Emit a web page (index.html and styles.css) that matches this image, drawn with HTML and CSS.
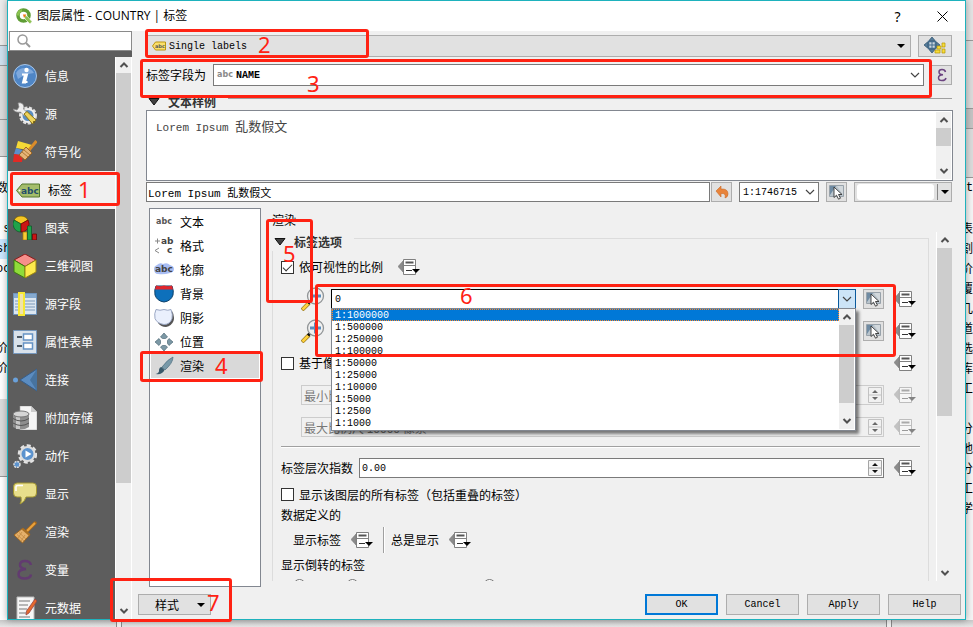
FILE: index.html
```html
<!DOCTYPE html>
<html lang="zh-CN">
<head>
    <meta charset="UTF-8">
    <title>图层属性 - COUNTRY | 标签</title>
    <link rel="stylesheet" href="styles.css">
</head>
<body>

<!-- shared icons -->
<svg class="sprite" aria-hidden="true">
    <symbol id="i-up" viewBox="0 0 16 16"><path d="M4.5 10 8 6.5l3.500 3.500" fill="none" stroke="#505050" stroke-width="2"/></symbol>
    <symbol id="i-down" viewBox="0 0 16 16"><path d="M4.500 6 8 9.500 11.500 6" fill="none" stroke="#505050" stroke-width="2"/></symbol>
    <symbol id="i-chevron" viewBox="0 0 16 16"><path d="M4 6l4 4 4-4" fill="none" stroke="#444" stroke-width="1.200"/></symbol>
    <symbol id="i-caret" viewBox="0 0 8 8"><path d="M0 2h8L4 6z" fill="#000"/></symbol>
    <symbol id="i-fold" viewBox="0 0 12 8"><path d="M1 .500h10L6 7z" fill="#404040" stroke="#111"/></symbol>
    <symbol id="i-defined" viewBox="0 0 22 16">
        <path d="M5 2v11L0 7.500z" fill="#8c8c8c" stroke="#777" stroke-width=".5"/>
        <path d="M5.500.500h12v15h-12zM5.500 6.500h12" fill="#fff" stroke="#808080"/>
        <path d="M7.500 3.500h8" stroke="#555" stroke-width="2"/>
        <path d="M8 11.500h6" stroke="#333"/>
        <path d="M14 10h8l-4 4z" fill="#000"/>
    </symbol>
    <symbol id="i-pick" viewBox="0 0 16 16">
        <path d="M.500 1.500h14v11h-14z" fill="#b9c4cc" stroke="#98a2aa"/>
        <path d="M1 2h6L1 11z" fill="#6f8ba3"/><path d="M8 2h6v9z" fill="#d2d8dc"/>
        <path d="M5 3v10.500l2.500-2.300 2 4 2-1-2-3.700H13z" fill="#fff" stroke="#333" stroke-width=".9"/>
    </symbol>
    <symbol id="i-zoom" viewBox="0 0 24 24">
        <path d="M1 23l7-7" stroke="#9a7a20" stroke-width="4"/><path d="M1.500 22.500l6-6" stroke="#ffd23c" stroke-width="2.500"/>
        <path d="M7 16.500L9.500 14" stroke="#111" stroke-width="3"/>
        <circle cx="14.500" cy="9" r="8" fill="#f0f0f0" stroke="#909496" stroke-width="1.300"/>
        <path d="M9 9h11" stroke="#5b8dbb" stroke-width="3"/>
    </symbol>
    <symbol id="i-spin" viewBox="0 0 14 16">
        <path d="M.500.500h13v15H.500zM.500 8h13" fill="#f3f3f3" stroke="#a5a5a5"/>
        <path d="M4 6h6L7 3zM4 10h6l-3 3z" fill="#111"/>
    </symbol>
    <symbol id="i-broom" viewBox="0 0 24 24">
        <path d="M22 3l-8 8" stroke="#a9691b" stroke-width="3.500" stroke-linecap="round"/><path d="M22 3l-8 8" stroke="#e9a33e" stroke-width="2"/>
        <path d="M10 8l7 6.500L9.500 23 1 15z" fill="#e5b06b" stroke="#9a6420"/>
        <path d="M9.500 9l7 6" stroke="#a86f24" stroke-width="2"/>
        <path d="M4 14.500l7 6.500M6 12.500l7 6.500M8 21l4-6M5 18l4-6" stroke="#c38a43" stroke-width=".8"/>
    </symbol>
</svg>

<div class="desktop">
    <div class="strip strip-left" aria-hidden="true">
        <div class="chrome tall"></div>
        <div class="chrome tool-bar"></div>
        <div class="chrome mid"></div>
        <div class="chrome"></div>
        <p class="lone">数</p>
        <p>&nbsp;s</p>
        <p class="hit">sh</p>
        <p>oc</p>
        <p class="far">价</p>
        <p>价</p>
        <div class="chrome foot"></div>
    </div>

    <div class="dialog">
        <header class="titlebar">
            <svg class="logo" viewBox="0 0 16 16">
                <circle cx="7.500" cy="7.500" r="5.500" fill="none" stroke="#5f9d35" stroke-width="3.500"/>
                <path d="M2 7.500a5.500 5.500 0 0 1 4-5.300" fill="none" stroke="#8bc34f" stroke-width="2.500"/>
                <path d="M8 7.500l3 .5 5 5.500L14 16l-5-5z" fill="#8cc152" stroke="#fff" stroke-width=".6"/>
                <path d="M7 6.500h3.500L8 10z" fill="#ee7913"/>
            </svg>
            <h1>图层属性 - COUNTRY | 标签</h1>
            <button class="title-btn" aria-label="帮助">?</button>
            <button class="title-btn" aria-label="关闭"><svg width="11" height="11" viewBox="0 0 11 11"><path d="M.500.500l10 10M10.500.500l-10 10" stroke="#000"/></svg></button>
        </header>

        <div class="body">
            <nav class="side">
                <div class="search">
                    <svg width="14" height="14" viewBox="0 0 14 14"><circle cx="5.500" cy="5.500" r="4.500" fill="none" stroke="#999" stroke-width="1.500"/><path d="M9 9l4 4" stroke="#999" stroke-width="2"/></svg>
                    <input type="text" aria-label="搜索">
                </div>
                <div class="side-main">
                    <ul class="pages">
                        <li><svg viewBox="0 0 24 24"><circle cx="12" cy="12" r="11.500" fill="#4f86c6" stroke="#a8c5e6"/><path d="M3 9a10 9 0 0 1 18 0q-9 1-16 6z" fill="#7fa9dc"/><circle cx="13.500" cy="6" r="2.200" fill="#fff"/><path d="M9 10.500h5l-2 7.500h2.500M12 10.500l-2 8h3" fill="none" stroke="#fff" stroke-width="2"/></svg>信息</li>
                        <li><svg viewBox="0 0 24 24"><circle cx="15" cy="13.500" r="7.500" fill="none" stroke="#dedede" stroke-width="3" stroke-dasharray="3 1.500"/><circle cx="15" cy="13.500" r="6.500" fill="#5b8ec2" stroke="#eee" stroke-width="2"/><path d="M5 1q5-1 6 4l-.5 2 4 4-3 3-4-4Q2 11 0 7l4 1 2-3z" fill="#eee" stroke="#888" stroke-width=".7"/><path d="M11 12l3-2.500 9 8.500-3.500 4z" fill="#eed35c" stroke="#8b7417"/><circle cx="21" cy="20" r="1" fill="#6c5812"/></svg>源</li>
                        <li><svg viewBox="0 0 24 24"><path d="M5 1l14 4-4 5L3 8z" fill="#f5d936"/><path d="M3 8l9 3-3 5-8-2z" fill="#5c8fcb"/><path d="M1 14l9 1-1 7H0z" fill="#e12a25"/><path d="M23.500 1L16 10" stroke="#d98b2b" stroke-width="3"/><path d="M13 7l6 6-7 7-6-5z" fill="#e5b577" stroke="#9a6420"/><path d="M9 12l6 5M11 10l6 5" stroke="#b07a35"/></svg>符号化</li>
                        <li class="current"><svg viewBox="0 0 24 24"><path d="M6 6h17.500v13H6L.5 12.500z" fill="#a5bd6b" stroke="#55792c"/><circle cx="3.500" cy="12.500" r="1" fill="#fff"/><text x="5" y="16" class="tag-text">abc</text></svg>标签</li>
                        <li><svg viewBox="0 0 24 24"><path d="M8 8L1 4a8 8 0 0 1 7-4 8 8 0 0 1 7 4z" fill="#f5c625" stroke="#6b5600" stroke-width=".7"/><path d="M8 8L1 4a8 8 0 0 0 7 12z" fill="#1fa34a" stroke="#0c5525" stroke-width=".7"/><path d="M8 8l7-4a8 8 0 0 1-7 12z" fill="#cb1515" stroke="#600" stroke-width=".7"/><path d="M10 16h4v8h-4z" fill="#f6cc36" stroke="#a97a00" stroke-width=".7"/><path d="M14.500 10h4v14h-4z" fill="#1fa34a" stroke="#0c5525" stroke-width=".7"/><path d="M19.500 18h4v6h-4z" fill="#cb1515" stroke="#600" stroke-width=".7"/></svg>图表</li>
                        <li><svg viewBox="0 0 24 24"><path d="M12 0l11 6-11 6.500L1 6z" fill="#f78f8b" stroke="#8e1a1a"/><path d="M1 6l11 6.500V24L1 18z" fill="#8fdb3a" stroke="#3d7a10"/><path d="M23 6l-11 6.500V24l11-6z" fill="#fde94c" stroke="#9a8412"/></svg>三维视图</li>
                        <li><svg viewBox="0 0 24 24"><path d="M.500 1.500h23v21H.500z" fill="#dce6f0" stroke="#6e94bd"/><path d="M1 2h22v4H1z" fill="#86aad0"/><path d="M12 9h10M12 12h10M12 15h10M12 18h10M2 9h3M2 12h3M2 15h3M2 18h3" stroke="#7a99ba"/><path d="M6 1h5v22H6z" fill="#f0e3ab" stroke="#f7e833" stroke-width="2"/></svg>源字段</li>
                        <li><svg viewBox="0 0 24 24"><path d="M.500.500h23v23H.500z" fill="#d9e2eb" stroke="#7597bd"/><path d="M4 7h5M4 16h5" stroke="#4f5c68" stroke-width="2"/><path d="M10.500 4h9v6h-9zM10.500 13h9v6h-9z" fill="#fff" stroke="#6593c5" stroke-width="1.500"/></svg>属性表单</li>
                        <li><svg viewBox="0 0 24 24"><path d="M24 1v22L7 12z" fill="#5b8cc0" stroke="#365e8b"/><path d="M24 1v22l-7-11z" fill="#47739f"/><circle cx="2.500" cy="12" r="2.500" fill="#6aa1db"/></svg>连接</li>
                        <li><svg viewBox="0 0 24 24"><path d="M7 0h11l6 6v18H7z" fill="#f5f5f5" stroke="#aaa" stroke-width=".6"/><path d="M18 0v6h6" fill="#ccc"/><path d="M0 8v13q8 5 16 0V8z" fill="#8e8e8e"/><path d="M3 9v14h4V9z" fill="#c8c8c8"/><ellipse cx="8" cy="8" rx="8" ry="3" fill="#d5d5d5" stroke="#777"/><path d="M0 12.500q8 5 16 0M0 17q8 5 16 0" fill="none" stroke="#555"/></svg>附加存储</li>
                        <li><svg viewBox="0 0 24 24"><circle cx="14.500" cy="10" r="8.500" fill="none" stroke="#e4e4e4" stroke-width="2.500" stroke-dasharray="4 2.500"/><circle cx="14.500" cy="10" r="7" fill="#5c93ce" stroke="#ddd" stroke-width="2"/><path d="M12.500 6.500l6 3.500-6 3.500z" fill="#fff"/><circle cx="4" cy="20.500" r="3" fill="#5c93ce" stroke="#ddd" stroke-width="1.500" stroke-dasharray="2 .8"/></svg>动作</li>
                        <li><svg viewBox="0 0 24 24"><path d="M4 1h16q3.500 0 3.500 4v6q0 4-3.500 4h-7q-1 5-6 7 2-3 1-7H4Q.5 15 .5 11V5Q.5 1 4 1z" fill="#e8df8c" stroke="#a29632"/><path d="M3 9V5q0-1.500 2-1.500h5" fill="none" stroke="#fff" stroke-width="1.500"/></svg>显示</li>
                        <li><svg><use href="#i-broom"/></svg>渲染</li>
                        <li><svg viewBox="0 0 24 24"><path d="M18 7q-1-4-6-4-5 0-5 4 0 3.500 6 4M13 11Q5.500 11.500 5.500 16q0 4.500 6 4.500 6 0 6.500-4" fill="none" stroke="#623b70" stroke-width="2.500"/></svg>变量</li>
                        <li><svg viewBox="0 0 24 24"><path d="M4 1h17v23H4z" fill="#f6f6f6" stroke="#bbb"/><path d="M6 5h11M6 9h9M6 13h8M6 17h7M6 21h11" stroke="#777"/><path d="M22 3l2 2-8 12-3 2 .5-4z" fill="#e66a2c" stroke="#944" stroke-width=".8"/></svg>元数据</li>
                    </ul>
                    <div class="scroll side-scroll">
                        <svg><use href="#i-up"/></svg>
                        <div class="thumb"></div>
                        <svg class="end"><use href="#i-down"/></svg>
                    </div>
                </div>
            </nav>

            <main class="main">
                <div class="content">
                    <div class="row mode-row">
                        <div class="combo gray">
                            <svg class="mode-icon" viewBox="0 0 14 10"><path d="M3.500 1h10v8h-10L.5 5z" fill="#fbe06a" stroke="#bb9510"/><text x="3" y="7" class="tiny-text">abc</text></svg>
                            <select class="mode-select" aria-label="标签模式"><option>Single labels</option></select>
                            <svg class="caret"><use href="#i-caret"/></svg>
                        </div>
                        <button class="tool wide" aria-label="自动放置设置"><svg width="22" height="18" viewBox="0 0 22 18"><path d="M8 0l3 3.500H5zM8 16l3-3.500H5zM0 8l3.500-3v6zM16 8l-3.500-3v6z" fill="#557d9c" stroke="#2c4d69" stroke-width=".7"/><path d="M4.500 4.500h7v7h-7z" fill="#c9d6df" stroke="#456d8c" stroke-width="1.500"/><path d="M8 3v10M3 8h10" stroke="#456d8c"/><path d="M13 9h4v3h-4zM18 6h3v4h-3zM11 13h5v3h-5zM18 12h3v4h-3z" fill="#f7dc3b" stroke="#b59700" stroke-width=".7"/></svg></button>
                    </div>

                    <div class="row field-row">
                        <label for="field">标签字段为</label>
                        <div class="combo">
                            <span class="abc small" aria-hidden="true">abc</span>
                            <select id="field" class="field-select"><option>NAME</option></select>
                            <svg class="chev"><use href="#i-chevron"/></svg>
                        </div>
                        <button class="tool" aria-label="表达式"><svg width="12" height="14" viewBox="0 0 12 14"><path d="M9.500 4q-.5-2.500-3.500-2.500T3 4q0 2.500 4 2.700Q2.500 7 2.500 9.700 2.500 12.500 6 12.500t4-2.500" fill="none" stroke="#6b4380" stroke-width="1.500"/></svg></button>
                    </div>

                    <div class="sample-head"><svg><use href="#i-fold"/></svg><h2>文本样例</h2><i></i></div>

                    <div class="preview">
                        <p><span class="mono">Lorem Ipsum </span>乱数假文</p>
                        <div class="scroll">
                            <svg><use href="#i-up"/></svg>
                            <div class="thumb"></div>
                            <svg class="end"><use href="#i-down"/></svg>
                        </div>
                    </div>

                    <div class="row sample-row">
                        <input type="text" class="sample-text" value="Lorem Ipsum 乱数假文" aria-label="样例文本">
                        <button class="tool" aria-label="重置"><svg width="14" height="14" viewBox="0 0 14 14"><path d="M1 6l5-5v3q7-.5 7 5 0 3-3 4 1.500-5-4-4.500V12z" fill="#e8833a" stroke="#c96a25" stroke-width=".6"/></svg></button>
                        <div class="combo scale">
                            <select class="mono" aria-label="预览比例"><option>1:1746715</option></select>
                            <svg class="chev"><use href="#i-chevron"/></svg>
                        </div>
                        <button class="tool" aria-label="地图比例"><svg class="s16"><use href="#i-pick"/></svg></button>
                        <button class="color-btn" aria-label="背景颜色"><i></i><svg><use href="#i-caret"/></svg></button>
                    </div>

                    <div class="panes">
                        <ul class="sections">
                            <li><span class="abc">abc</span>文本</li>
                            <li><svg viewBox="0 0 20 20"><path d="M1 5h5M3.500 2.500v5M5 12l-4 2.500L5 17" fill="none" stroke="#888"/><text x="7" y="8" class="fmt-text">ab</text><text x="13" y="17" class="fmt-text">c</text></svg>格式</li>
                            <li><svg viewBox="0 0 20 20"><path d="M3 5q3-3 6-1 4-2 7 1 4 1 4 4t-4 4q-6 2-12 1Q0 14 0 9q0-3 3-4z" fill="#a8bdf3"/><text x="1" y="12" class="fmt-text">abc</text></svg>轮廓</li>
                            <li><svg viewBox="0 0 20 20"><path d="M2 2h16q2 5 1 9-2 6-9 7-7-1-9-7-1-5 1-9z" fill="#0d70bb" stroke="#0b4069"/><path d="M2 1.500q4 1.500 8 0 4 1.500 8 0l1 4H1z" fill="#e0262d"/></svg>背景</li>
                            <li><svg viewBox="0 0 20 20"><path d="M5 3h13q3 5 1.500 10-2 5-7.500 6-5 0-8-4z" fill="#555"/><path d="M2 1.500q4 1.500 8 0 4 1.500 7 0 2 5 1 9-2 6-8 6-7-1-9-6-1-5 1-9z" fill="#eaf0fd" stroke="#9aa7c4"/></svg>阴影</li>
                            <li><svg viewBox="0 0 20 20"><path d="M10 1l3.500 4-2 1.500h-3L6.500 5zM10 19l3.500-4-2-1.500h-3l-2 1.500zM1 10l4-3.500 1.500 2v3L5 13.500zM19 10l-4-3.500-1.500 2v3l1.500 2z" fill="#7c98a5" stroke="#506c79" stroke-width=".7"/></svg>位置</li>
                            <li class="current"><svg viewBox="0 0 20 20"><path d="M19 1q0 6-8 13l-3-3Q14 3 19 1z" fill="#7999a8" stroke="#4f6f7f" stroke-width=".7"/><path d="M7.500 11l3 3q-2 5-9 4 4-1 3.500-4 .5-3 2.500-3z" fill="#39596a"/></svg>渲染</li>
                        </ul>

                        <div class="pane">
                            <p class="pane-title">渲染</p>
                            <div class="pane-scroll">
                                <section class="group">
                                    <div class="group-head"><svg><use href="#i-fold"/></svg><h2>标签选项</h2><i></i></div>
                                    <div class="group-body">
                                        <div class="line checks">
                                            <label class="check"><input type="checkbox" checked>依可视性的比例</label>
                                            <button class="dd" aria-label="数据定义"><svg><use href="#i-defined"/></svg></button>
                                        </div>
                                        <div class="line scales">
                                            <svg class="lens"><use href="#i-zoom"/></svg>
                                            <div class="open-combo">
                                                <input type="text" class="mono" value="0" aria-label="最小比例">
                                                <button class="drop" aria-label="展开"><svg class="s16"><use href="#i-chevron"/></svg></button>
                                                <div class="popup">
                                                    <ul role="listbox" aria-label="比例">
                                                        <li role="option" aria-selected="true">1:1000000</li>
                                                        <li role="option">1:500000</li>
                                                        <li role="option">1:250000</li>
                                                        <li role="option">1:100000</li>
                                                        <li role="option">1:50000</li>
                                                        <li role="option">1:25000</li>
                                                        <li role="option">1:10000</li>
                                                        <li role="option">1:5000</li>
                                                        <li role="option">1:2500</li>
                                                        <li role="option">1:1000</li>
                                                    </ul>
                                                    <div class="scroll">
                                                        <svg><use href="#i-up"/></svg>
                                                        <div class="thumb"></div>
                                                        <svg class="end"><use href="#i-down"/></svg>
                                                    </div>
                                                </div>
                                            </div>
                                            <button class="tool" aria-label="取当前比例"><svg class="s16"><use href="#i-pick"/></svg></button>
                                            <button class="dd" aria-label="数据定义"><svg><use href="#i-defined"/></svg></button>
                                        </div>
                                        <div class="line scales">
                                            <svg class="lens" viewBox="0 0 24 24"><use href="#i-zoom"/><path d="M14.500 3.500v11" stroke="#5b8dbb" stroke-width="3"/></svg>
                                            <div class="open-combo"></div>
                                            <button class="tool" aria-label="取当前比例"><svg class="s16"><use href="#i-pick"/></svg></button>
                                            <button class="dd" aria-label="数据定义"><svg><use href="#i-defined"/></svg></button>
                                        </div>
                                        <div class="line">
                                            <label class="check grow"><input type="checkbox">基于像素大小的可视性</label>
                                            <button class="dd" aria-label="数据定义"><svg><use href="#i-defined"/></svg></button>
                                        </div>
                                        <div class="line indent">
                                            <div class="spin off"><input type="text" value="最小比例尺 3 像素" aria-label="最小尺寸" disabled><svg><use href="#i-spin"/></svg></div>
                                            <button class="dd" aria-label="数据定义" disabled><svg><use href="#i-defined"/></svg></button>
                                        </div>
                                        <div class="line indent">
                                            <div class="spin off"><input type="text" value="最大比例尺 10000 像素" aria-label="最大尺寸" disabled><svg><use href="#i-spin"/></svg></div>
                                            <button class="dd" aria-label="数据定义" disabled><svg><use href="#i-defined"/></svg></button>
                                        </div>
                                        <hr>
                                        <div class="line">
                                            <label class="z-label" for="zindex">标签层次指数</label>
                                            <div class="spin"><input id="zindex" type="text" class="mono" value="0.00"><svg><use href="#i-spin"/></svg></div>
                                            <button class="dd" aria-label="数据定义"><svg><use href="#i-defined"/></svg></button>
                                        </div>
                                        <label class="check short"><input type="checkbox">显示该图层的所有标签（包括重叠的标签）</label>
                                        <p class="text-line">数据定义的</p>
                                        <div class="line show">
                                            <span>显示标签</span>
                                            <button class="dd" aria-label="数据定义"><svg><use href="#i-defined"/></svg></button>
                                            <i class="bar"></i>
                                            <span>总是显示</span>
                                            <button class="dd" aria-label="数据定义"><svg><use href="#i-defined"/></svg></button>
                                        </div>
                                        <p class="text-line">显示倒转的标签</p>
                                        <div class="radios">
                                            <input type="radio" name="upside" aria-label="从不">
                                            <input type="radio" name="upside" aria-label="旋转时">
                                            <input type="radio" name="upside" aria-label="总是">
                                        </div>
                                    </div>
                                </section>
                                <div class="scroll">
                                    <svg><use href="#i-up"/></svg>
                                    <div class="thumb"></div>
                                    <svg class="end"><use href="#i-down"/></svg>
                                </div>
                            </div>
                        </div>
                    </div>
                </div>

                <footer class="buttons">
                    <button class="btn style-btn">样式<svg><use href="#i-caret"/></svg></button>
                    <button class="btn primary">OK</button>
                    <button class="btn">Cancel</button>
                    <button class="btn">Apply</button>
                    <button class="btn">Help</button>
                </footer>
            </main>
        </div>

        <div class="mark m1"></div><b class="num n1">1</b>
        <div class="mark m2"></div><b class="num n2">2</b>
        <div class="mark m3"></div><b class="num n3">3</b>
        <div class="mark m4"></div><b class="num n4">4</b>
        <div class="mark m5"></div><b class="num n5">5</b>
        <div class="mark m6"></div><b class="num n6">6</b>
        <div class="mark m7"></div><b class="num n7">7</b>
    </div>

    <div class="strip strip-right" aria-hidden="true">
        <div class="chrome top"></div>
        <div class="chrome bar1"></div>
        <div class="chrome bar2"></div>
        <div class="chrome bar3"></div>
        <p class="latin">te</p>
        <p class="first">表格</p>
        <p>割线</p>
        <p>价格</p>
        <p>覆盖</p>
        <p>几何</p>
        <p>道路</p>
        <p>选择</p>
        <p>库房</p>
        <p>工具</p>
        <p class="next">分析</p>
        <p>地形</p>
        <p>分析</p>
        <p>工具</p>
        <p>学习</p>
    </div>
</div>

<div class="under" aria-hidden="true"><i></i><i></i></div>

</body>
</html>
```

FILE: styles.css
```css
* {
    box-sizing: border-box;
}

body {
    margin: 0;
    height: 100vh;
    display: flex;
    flex-direction: column;
    overflow: hidden;
    background: #e4e4e4;
    font-family: "Noto Sans CJK SC", sans-serif;
    font-size: 12px;
    line-height: 16px;
    color: #000;
}

h1, h2, p, ul {
    margin: 0;
    padding: 0;
    font-size: 12px;
    list-style: none;
}

button, input, select {
    font-family: inherit;
    font-size: 12px;
    color: #000;
    margin: 0;
    padding: 0;
    border-radius: 0;
}

svg {
    display: block;
    flex: none;
}

.sprite {
    position: absolute;
    width: 0;
    height: 0;
}

.s16 {
    width: 16px;
    height: 16px;
}

.mono, .mono option {
    font-family: "Liberation Mono", monospace;
    font-size: 10px;
}

.desktop {
    flex: 1;
    min-height: 0;
    display: flex;
}

/* windows behind the dialog */
.strip {
    width: 7px;
    flex: none;
    overflow: hidden;
    background: #fff;
    line-height: 20px;
}

.strip p {
    height: 20px;
    white-space: nowrap;
    overflow: hidden;
}

.strip-left p {
    font-family: "Liberation Mono", "Noto Sans CJK SC", monospace;
    text-indent: -4px;
}

.chrome {
    height: 37px;
    background: #dcdcdc;
    border-bottom: 1px solid #999;
}

.strip-left .tall {
    height: 46px;
    background: #ececec;
}

.strip-left .tool-bar {
    height: 20px;
    background: #cfe0ee;
}

.strip-left .mid {
    height: 54px;
}

.strip-left .lone {
    margin-top: 22px;
    margin-bottom: 20px;
}

.strip-left .hit {
    background: #cce8ff;
}

.strip-left .far {
    margin-top: 60px;
}

.strip-left .foot {
    height: 78px;
    margin-top: 20px;
}

.strip-right {
    background: #f5f5f5;
}

.strip-right p {
    text-indent: -5px;
}

.strip-right .latin {
    text-indent: 0;
    font-family: "Liberation Mono", monospace;
}

.strip-right .top {
    height: 41px;
    background: #e4e4e4;
}

.strip-right .bar1 {
    height: 68px;
}

.strip-right .bar2 {
    height: 20px;
    background: #c4c4c4;
}

.strip-right .bar3 {
    height: 49px;
}

.strip-right .first {
    margin-top: 20px;
}

.strip-right .next {
    margin-top: 20px;
}

.under {
    height: 7px;
    flex: none;
    display: flex;
    justify-content: space-between;
    padding: 0 81px 0 116px;
    background: linear-gradient(#c8c8c8, #e6e6e6);
}

.under i {
    width: 6px;
    border: solid #888;
    border-width: 0 1px;
    background: #f0f0f0;
}

/* dialog */
.dialog {
    position: relative;
    flex: 1;
    min-width: 0;
    display: flex;
    flex-direction: column;
    background: #f0f0f0;
    border: 1px solid #1eb2bd;
    box-shadow: 0 0 7px rgba(0, 0, 0, .35);
}

.titlebar {
    height: 30px;
    flex: none;
    display: flex;
    align-items: center;
    padding-left: 8px;
    background: #fff;
}

.logo {
    width: 16px;
    height: 16px;
}

.titlebar h1 {
    flex: 1;
    margin-left: 5px;
    font-family: "Open Sans", "Noto Sans CJK SC", sans-serif;
    font-weight: 400;
}

.title-btn {
    width: 45px;
    height: 30px;
    display: flex;
    align-items: center;
    justify-content: center;
    border: 0;
    background: none;
    font-family: "Noto Sans", sans-serif;
    font-size: 14px;
}

.body {
    flex: 1;
    min-height: 0;
    display: flex;
}

.side {
    width: 124px;
    flex: none;
    display: flex;
    flex-direction: column;
}

.search {
    height: 20px;
    flex: none;
    display: flex;
    align-items: center;
    margin-left: 1px;
    padding-left: 7px;
    background: #fff;
    border: 1px solid #8a8a8a;
}

.search input {
    flex: 1;
    min-width: 0;
    border: 0;
    background: none;
}

.side-main {
    flex: 1;
    min-height: 0;
    display: flex;
    overflow: hidden;
    border-top: 6px solid #5d5d5d;
}

.pages {
    flex: 1;
    background: #5d5d5d;
    color: #fff;
}

.pages li {
    height: 38px;
    display: flex;
    align-items: center;
    gap: 8px;
    padding-left: 5px;
}

.pages svg {
    width: 24px;
    height: 24px;
}

.pages .current {
    padding-left: 8px;
    background: #f0f0f0;
    color: #000;
}

.tag-text, .fmt-text, .tiny-text {
    font-family: "DejaVu Sans", sans-serif;
    font-weight: 700;
    font-size: 9px;
    fill: #264f6b;
}

.fmt-text {
    fill: #444;
}

.tiny-text {
    font-size: 5px;
    fill: #555;
}

.scroll {
    width: 15px;
    flex: none;
    display: flex;
    flex-direction: column;
    align-items: center;
    background: #f0f0f0;
}

.scroll svg {
    width: 16px;
    height: 16px;
}

.scroll .end {
    margin-top: auto;
}

.thumb {
    align-self: stretch;
    background: #cdcdcd;
}

.side-scroll {
    width: 17px;
    border: solid #fff;
    border-width: 0 1px;
}

.side-scroll .thumb {
    height: 410px;
}

.main {
    flex: 1;
    min-width: 0;
    display: flex;
    flex-direction: column;
}

.content {
    flex: 1;
    min-height: 0;
    display: flex;
    flex-direction: column;
    padding: 4px 13px 0 14px;
}

.row {
    display: flex;
    align-items: center;
    flex: none;
}

.mode-row, .field-row {
    height: 22px;
    gap: 7px;
    margin-bottom: 7px;
}

.field-row {
    margin-bottom: 12px;
}

.combo {
    position: relative;
    flex: 1;
    height: 22px;
    display: flex;
    align-items: center;
    background: #fff;
    border: 1px solid #7a7a7a;
}

.combo select {
    flex: 1;
    width: 100%;
    height: 20px;
    appearance: none;
    border: 0;
    background: transparent;
}

.gray {
    background: #e1e1e1;
    border-color: #adadad;
}

.mode-icon {
    width: 14px;
    height: 10px;
    margin: 0 3px 0 5px;
}

.combo .mode-select {
    font-family: "Liberation Mono", monospace;
    font-size: 10px;
}

.caret {
    width: 8px;
    height: 8px;
    margin-right: 5px;
}

.chev {
    width: 16px;
    height: 16px;
}

.abc {
    width: 20px;
    font-family: "DejaVu Sans", sans-serif;
    font-weight: 700;
    font-size: 8px;
    text-align: center;
    color: #555;
}

.small {
    width: 22px;
    color: #8a8a8a;
}

.combo .field-select {
    font-family: "Liberation Mono", monospace;
    font-size: 10px;
    font-weight: 700;
}

.tool {
    width: 21px;
    height: 20px;
    flex: none;
    display: flex;
    align-items: center;
    justify-content: center;
    border: 1px solid #adadad;
    background: #e1e1e1;
}

.wide {
    width: 34px;
    height: 22px;
}

.sample-head {
    height: 12px;
    flex: none;
    display: flex;
    align-items: flex-start;
    overflow: hidden;
    padding-left: 2px;
    line-height: 8px;
}

.sample-head svg, .group-head svg {
    width: 12px;
    height: 8px;
}

.sample-head h2, .group-head h2 {
    margin: 0 12px 0 8px;
    color: #333;
}

.sample-head i {
    flex: 1;
    border-top: 1px solid #a0a0a0;
}

.preview {
    height: 71px;
    flex: none;
    display: flex;
    justify-content: space-between;
    margin-right: -1px;
    background: #fff;
    border: 1px solid #828790;
    padding: 1px;
}

.preview p {
    padding: 6px 8px;
    font-size: 13px;
    color: #444;
    white-space: pre;
}

.preview .mono {
    font-size: 11px;
}

.preview .thumb {
    height: 18px;
}

.sample-row {
    height: 20px;
    margin-top: 1px;
    gap: 7px;
}

.sample-text {
    flex: 1;
    min-width: 0;
    height: 20px;
    margin-right: -6px;
    padding-left: 1px;
    border: 1px solid #7a7a7a;
    font-family: "Liberation Mono", "Noto Sans CJK SC", monospace;
    font-size: 11px;
}

.scale {
    flex: none;
    width: 80px;
    height: 20px;
}

.scale select {
    height: 18px;
    padding-left: 3px;
}

.color-btn {
    width: 98px;
    height: 20px;
    display: flex;
    align-items: center;
    padding: 0 2px;
    border: 1px solid #adadad;
    background: #e1e1e1;
}

.color-btn i {
    flex: 1;
    height: 16px;
    border-radius: 3px;
    background: #fff;
}

.color-btn svg {
    width: 12px;
    height: 16px;
    margin-left: 3px;
    padding-left: 3px;
    border-left: 1px solid #888;
}

.panes {
    flex: 1;
    min-height: 0;
    display: flex;
    gap: 11px;
    margin-top: 6px;
    padding-left: 3px;
}

.sections {
    width: 112px;
    flex: none;
    padding: 1px;
    background: #fff;
    border: 1px solid #828790;
}

.sections li {
    height: 24px;
    display: flex;
    align-items: center;
    gap: 6px;
    padding-left: 3px;
}

.sections svg {
    width: 20px;
    height: 20px;
}

.sections .current {
    background: #d9d9d9;
}

.pane {
    flex: 1;
    min-width: 0;
    display: flex;
    flex-direction: column;
    padding: 4px 0 6px;
}

.pane-title {
    height: 20px;
    flex: none;
}

.pane-scroll {
    flex: 1;
    min-height: 0;
    display: flex;
    gap: 7px;
    overflow: hidden;
}

.pane-scroll > .scroll {
    width: 16px;
    border-left: 1px solid #fff;
}

.pane-scroll > .scroll .thumb {
    height: 168px;
}

.group {
    flex: 1;
    min-width: 0;
}

.group-head {
    height: 19px;
    display: flex;
    align-items: center;
    padding-left: 2px;
}

.group-head i {
    flex: 1;
    height: 13px;
    align-self: flex-end;
    border: solid #dcdcdc;
    border-width: 1px 1px 0 0;
}

.group-body {
    padding: 0 8px;
    border: solid #dcdcdc;
    border-width: 0 1px;
}

.line {
    height: 32px;
    display: flex;
    align-items: center;
    gap: 10px;
    padding-right: 4px;
}

.checks {
    gap: 15px;
}

.check {
    display: flex;
    align-items: center;
    gap: 5px;
}

.grow {
    flex: 1;
}

.short {
    height: 21px;
}

.check input {
    appearance: none;
    width: 13px;
    height: 13px;
    border: 1px solid #333;
    background: #fff;
}

.check input:checked::before {
    content: "";
    display: block;
    width: 8px;
    height: 4px;
    margin: 2px 1px;
    border: solid #333;
    border-width: 0 0 1px 1px;
    transform: rotate(-45deg);
}

.dd {
    width: 22px;
    height: 16px;
    flex: none;
    border: 0;
    background: none;
}

.dd svg {
    width: 22px;
    height: 16px;
}

.dd:disabled {
    opacity: .45;
}

.scales, .indent {
    padding-left: 20px;
}

.lens {
    width: 24px;
    height: 24px;
}

.scales .lens {
    margin-right: -4px;
}

.scales .tool {
    margin-left: -3px;
}

.open-combo {
    position: relative;
    flex: 1;
    height: 20px;
    display: flex;
}

.open-combo > input {
    flex: 1;
    min-width: 0;
    padding: 0 3px;
    border: 1px solid #000;
    border-right: 0;
    outline: 0;
}

.drop {
    width: 18px;
    border: 1px solid #0a5a9c;
    background: #cce4f7;
}

/* list of scales, opened below its box */
.popup {
    position: absolute;
    top: 19px;
    left: 0;
    right: 0;
    z-index: 2;
    display: flex;
    padding: 0 1px 1px 0;
    background: #fff;
    border: 1px solid #828790;
    box-shadow: 3px 3px 3px rgba(0, 0, 0, .5);
}

.popup ul {
    flex: 1;
}

.popup li {
    height: 12px;
    padding-left: 2px;
    border: 1px dotted transparent;
    font-family: "Liberation Mono", monospace;
    font-size: 10px;
    line-height: 11px;
}

.popup [aria-selected="true"] {
    background: #0078d7;
    border-color: #ff8728;
    color: #fff;
}

.popup .thumb {
    height: 78px;
}

.spin {
    flex: 1;
    height: 20px;
    display: flex;
    align-items: center;
    padding-right: 1px;
    background: #fff;
    border: 1px solid #7a7a7a;
}

.spin input {
    flex: 1;
    min-width: 0;
    height: 18px;
    padding-left: 2px;
    border: 0;
    background: none;
}

.spin svg {
    width: 14px;
    height: 16px;
}

.off {
    background: #f0f0f0;
    border-color: #ccc;
}

.off input {
    color: #787878;
}

.off svg {
    opacity: .6;
}

.z-label {
    margin-right: -4px;
}

hr {
    height: 2px;
    margin: 3px 0 4px;
    border: 0;
    border-top: 1px solid #a0a0a0;
    background: #fff;
}

.text-line {
    height: 20px;
    line-height: 20px;
}

.show {
    height: 30px;
    padding-left: 12px;
}

.bar {
    width: 2px;
    height: 26px;
    border-left: 1px solid #a0a0a0;
    background: #fff;
    margin-right: -4px;
}

.radios {
    height: 20px;
    display: flex;
    gap: 40px;
    padding: 4px 12px;
}

.radios input {
    width: 13px;
    height: 13px;
}

.radios input:last-child {
    margin-left: 84px;
}

.buttons {
    flex: none;
    display: flex;
    gap: 8px;
    padding: 7px 4px 4px 6px;
}

.btn {
    width: 73px;
    height: 21px;
    border: 1px solid #adadad;
    background: #e1e1e1;
    font-family: "Liberation Mono", monospace;
    font-size: 10px;
}

.primary {
    border: 2px solid #0078d7;
}

.style-btn {
    display: flex;
    align-items: center;
    gap: 18px;
    margin-right: auto;
    padding-left: 16px;
    font-family: inherit;
    font-size: 12px;
}

.style-btn svg {
    width: 8px;
    height: 8px;
}

/* numbered red callouts laid over the dialog */
.mark {
    position: absolute;
    z-index: 3;
    border: 3px solid #ff2213;
    border-radius: 3px;
    pointer-events: none;
}

.num {
    position: absolute;
    z-index: 3;
    font-family: "Noto Sans", sans-serif;
    font-weight: 400;
    font-size: 22px;
    line-height: 24px;
    color: #ff2213;
}

.m1 { left: 2px; top: 171px; width: 110px; height: 34px; }
.m2 { left: 137px; top: 28px; width: 224px; height: 29px; }
.m3 { left: 132px; top: 58px; width: 792px; height: 39px; }
.m4 { left: 132px; top: 350px; width: 123px; height: 31px; }
.m5 { left: 258px; top: 218px; width: 47px; height: 84px; }
.m6 { left: 307px; top: 283px; width: 581px; height: 73px; }
.m7 { left: 102px; top: 577px; width: 122px; height: 44px; }

.n1 { left: 70px; top: 176px; }
.n2 { left: 250px; top: 31px; }
.n3 { left: 299px; top: 70px; }
.n4 { left: 207px; top: 352px; }
.n5 { left: 275px; top: 240px; }
.n6 { left: 452px; top: 282px; }
.n7 { left: 199px; top: 589px; }
```
